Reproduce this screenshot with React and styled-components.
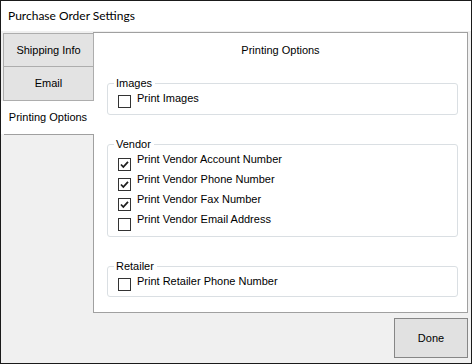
import React from "react";
import styled, { createGlobalStyle } from "styled-components";

const Global = createGlobalStyle`
  html, body { margin: 0; padding: 0; background: #ffffff; }
  * { box-sizing: border-box; }
`;

const Window = styled.div`
  width: 472px;
  height: 364px;
  border: 1px solid #1a1a1a;
  background: #f0f0f0;
  display: flex;
  flex-direction: column;
  font-family: "Liberation Sans", Arial, sans-serif;
  font-size: 11px;
  color: #000;
`;

const TitleBar = styled.div`
  height: 30px;
  flex: none;
  background: #ffffff;
  display: flex;
  align-items: center;
  padding-left: 7px;
  padding-bottom: 2px;
  font-family: Lato, "Noto Sans", sans-serif;
  font-size: 12px;
  color: #000;
`;

const TabControl = styled.div`
  margin-top: 1px;
  height: 281px;
  flex: none;
  display: flex;
  margin-right: 3px;
`;

const TabColumn = styled.div`
  width: 92px;
  flex: none;
  display: flex;
  flex-direction: column;
  padding-top: 1px;
  position: relative;
  z-index: 1;
`;

const Tab = styled.div`
  height: ${(p) => (p.$active ? 33 : 34)}px;
  margin-left: ${(p) => (p.$active ? 0 : 2)}px;
  margin-right: -1px;
  background: ${(p) => (p.$active ? "#ffffff" : "#e3e3e3")};
  border: ${(p) => (p.$active ? "none" : "1px solid #adadad")};
  border-top: ${(p) => (p.$active || p.$first ? "" : "none")};
  display: flex;
  align-items: center;
  justify-content: center;
  line-height: 13px;
  white-space: nowrap;
  padding-left: ${(p) => (p.$active ? 1 : 0)}px;
`;

const TabFiller = styled.div`
  flex: 1;
  margin-left: 3px;
  margin-right: -1px;
  border-top: 1px solid #a0a0a0;
`;

const Panel = styled.div`
  width: 375px;
  flex: none;
  background: #ffffff;
  border: 1px solid #a0a0a0;
  display: flex;
  flex-direction: column;
  padding: 11px 9px 0 13px;
`;

const PanelTitle = styled.div`
  text-align: center;
  line-height: 13px;
  margin-bottom: 20px;
  margin-left: -4px;
`;

const Group = styled.fieldset`
  margin: 0 0 23px 0;
  padding: 2px 0 ${(p) => p.$pb || 2}px 0;
  border: 1px solid #dadfe3;
  border-radius: 3px;
  min-width: 0;
`;

const Legend = styled.legend`
  margin-left: 6px;
  padding: 0 3px 0 2px;
  line-height: 13px;
  color: #000;
`;

const Row = styled.label`
  display: flex;
  align-items: flex-start;
  height: 20px;
  margin-left: 10px;
  line-height: 13px;
  gap: 6px;
`;

const Box = styled.span`
  width: 13px;
  height: 13px;
  flex: none;
  margin-top: ${(p) => p.$off || 3}px;
  border: 1px solid #333333;
  background: #ffffff;
  display: flex;
  align-items: center;
  justify-content: center;
`;

const Footer = styled.div`
  flex: 1;
  display: flex;
  justify-content: flex-end;
  align-items: flex-start;
  padding: 5px 3px 0 0;
`;

const DoneButton = styled.button`
  width: 74px;
  height: 40px;
  background: #e1e1e1;
  border: 1px solid #868686;
  font-family: "Liberation Sans", Arial, sans-serif;
  font-size: 11px;
  color: #000;
  padding: 0;
`;

const Check = () => (
  <svg width="11" height="11" viewBox="0 0 11 11">
    <polyline
      points="2,5.5 4.3,8 9,2.8"
      fill="none"
      stroke="#1e1e1e"
      strokeWidth="1.8"
    />
  </svg>
);

const CheckRow = ({ checked, label, off }) => (
  <Row>
    <Box $off={off}>{checked && <Check />}</Box>
    <span>{label}</span>
  </Row>
);

export default function App() {
  return (
    <>
      <Global />
      <Window>
        <TitleBar>Purchase Order Settings</TitleBar>
        <TabControl>
          <TabColumn>
            <Tab $first>Shipping Info</Tab>
            <Tab>Email</Tab>
            <Tab $active>Printing Options</Tab>
            <TabFiller />
          </TabColumn>
          <Panel>
            <PanelTitle>Printing Options</PanelTitle>
            <Group>
              <Legend>Images</Legend>
              <CheckRow label="Print Images" off={3} />
            </Group>
            <Group $pb={3}>
              <Legend>Vendor</Legend>
              <CheckRow checked label="Print Vendor Account Number" off={5} />
              <CheckRow checked label="Print Vendor Phone Number" off={5} />
              <CheckRow checked label="Print Vendor Fax Number" off={5} />
              <CheckRow label="Print Vendor Email Address" off={5} />
            </Group>
            <Group $pb={1}>
              <Legend>Retailer</Legend>
              <CheckRow label="Print Retailer Phone Number" off={3} />
            </Group>
          </Panel>
        </TabControl>
        <Footer>
          <DoneButton>Done</DoneButton>
        </Footer>
      </Window>
    </>
  );
}
